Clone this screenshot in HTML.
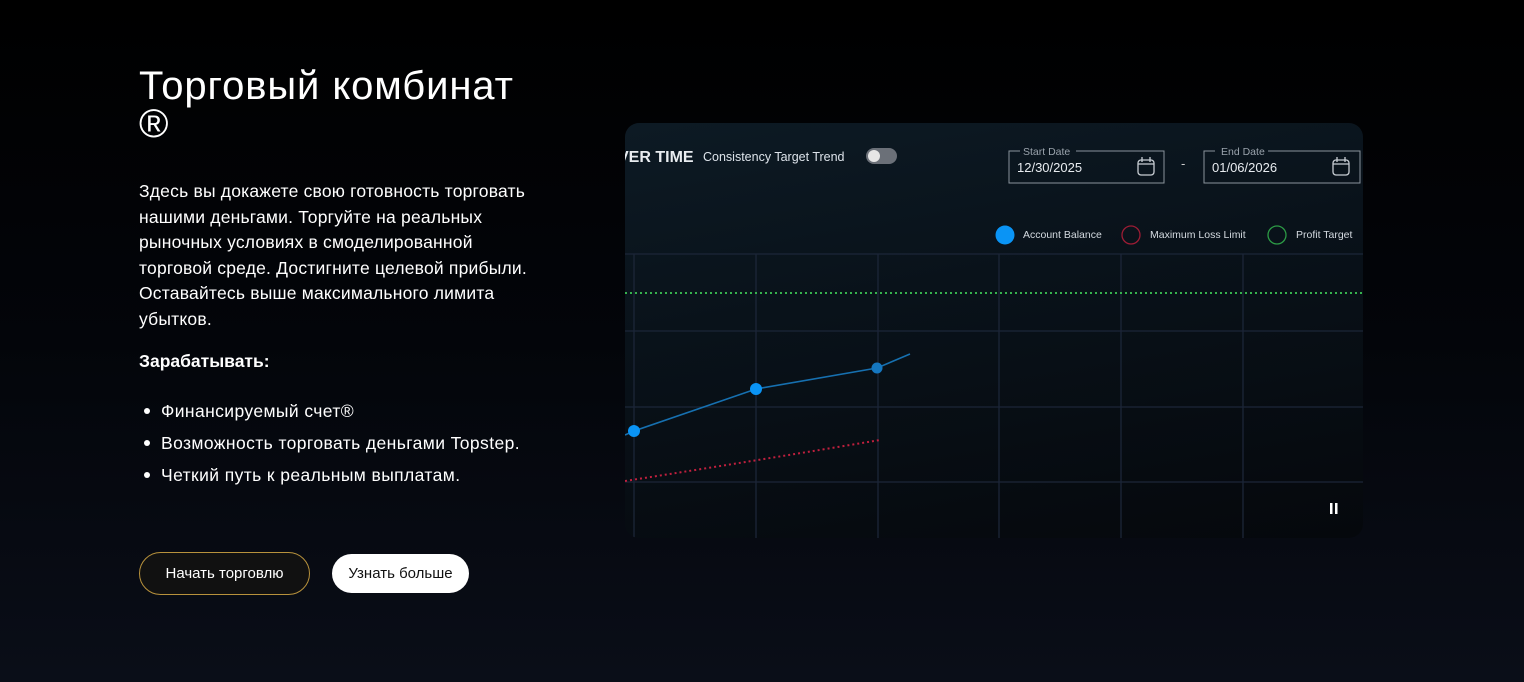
<!DOCTYPE html>
<html><head><meta charset="utf-8"><style>
*{margin:0;padding:0;box-sizing:border-box}
body{width:1524px;height:682px;overflow:hidden;background:linear-gradient(180deg,#000 0%,#03050a 50%,#0a0e18 100%);font-family:"Liberation Sans",sans-serif;color:#fff;position:relative}
h1{position:absolute;left:139px;top:67px;font-size:40px;font-weight:400;line-height:38px;letter-spacing:0.9px}
.p{position:absolute;left:139px;top:179px;width:404px;font-size:17.5px;line-height:25.5px;letter-spacing:0.2px}
.e{position:absolute;left:139px;top:351px;font-size:17.5px;font-weight:700}
ul{position:absolute;left:161px;top:395px;font-size:17.5px;list-style:none;letter-spacing:0.4px}
ul li{line-height:32px;position:relative}
ul li:before{content:"";position:absolute;left:-17px;top:13px;width:6px;height:6px;border-radius:50%;background:#fff}
.b1{position:absolute;left:139px;top:552px;width:171px;height:43px;border:1px solid #b8923c;border-radius:22px;background:#111;font-size:15px;text-align:center;line-height:41px}
.b2{position:absolute;left:332px;top:554px;width:137px;height:39px;border-radius:20px;background:#fff;color:#111;font-size:15px;text-align:center;line-height:39px}
.c{position:absolute;left:625px;top:123px;width:738px;height:415px;border-radius:14px;overflow:hidden;background:linear-gradient(170deg,#0d1a24 0%,#09121a 40%,#05080c 100%)}
</style></head><body>
<h1>Торговый комбинат<br>®</h1>
<div class="p">Здесь вы докажете свою готовность торговать нашими деньгами. Торгуйте на реальных рыночных условиях в смоделированной торговой среде. Достигните целевой прибыли. Оставайтесь выше максимального лимита убытков.</div>
<div class="e">Зарабатывать:</div>
<ul><li>Финансируемый счет®</li><li>Возможность торговать деньгами Topstep.</li><li>Четкий путь к реальным выплатам.</li></ul>
<div class="b1">Начать торговлю</div>
<div class="b2">Узнать больше</div>
<div class="c">
<svg width="738" height="415" viewBox="625 123 738 415" style="position:absolute;left:0;top:0;font-family:'Liberation Sans',sans-serif">
<text x="618" y="162" fill="#e8ecf0" font-size="16" font-weight="700">VER TIME</text>
<text x="703" y="161" fill="#dde3ea" font-size="12.5">Consistency Target Trend</text>
<rect x="866" y="148" width="31" height="16" rx="8" fill="#6b7078"/><circle cx="874" cy="156" r="6" fill="#e6e6e6"/>
<g fill="none" stroke="#8a939c" stroke-width="1">
<path d="M1020 151 H1009 V183 H1164 V151 H1076"/>
<path d="M1215 151 H1204 V183 H1360 V151 H1268"/>
</g>
<text x="1023" y="155" fill="#9aa3ac" font-size="10.5">Start Date</text>
<text x="1221" y="155" fill="#9aa3ac" font-size="10.5">End Date</text>
<text x="1017" y="172" fill="#e8ecf0" font-size="13">12/30/2025</text>
<text x="1212" y="172" fill="#e8ecf0" font-size="13">01/06/2026</text>
<text x="1181" y="168" fill="#ccc" font-size="13">-</text>
<g fill="none" stroke="#c8ced4" stroke-width="1.3">
<rect x="1138" y="160" width="16" height="15" rx="3"/><path d="M1138 164H1154M1142 157v5M1150 157v5"/>
<rect x="1333" y="160" width="16" height="15" rx="3"/><path d="M1333 164H1349M1337 157v5M1345 157v5"/>
</g>
<circle cx="1005" cy="235" r="9.5" fill="#0a94f5"/>
<text x="1023" y="238" fill="#d4dae0" font-size="10.5">Account Balance</text>
<circle cx="1131" cy="235" r="9" fill="none" stroke="#9b1c34" stroke-width="1.3"/>
<text x="1150" y="238" fill="#d4dae0" font-size="10.5">Maximum Loss Limit</text>
<circle cx="1277" cy="235" r="9" fill="none" stroke="#2c9a45" stroke-width="1.3"/>
<text x="1296" y="238" fill="#d4dae0" font-size="10.5">Profit Target</text>
<g stroke="#1c2638" stroke-width="1.3">
<path d="M625 254H1363M625 331H1363M625 407H1363M625 482H1363"/>
<path d="M634 254V538M756 254V538M878 254V538M999 254V538M1121 254V538M1243 254V538"/>
</g>
<path d="M625 293H1363" stroke="#36b24e" stroke-width="2" stroke-dasharray="2 3"/>
<path d="M625 481 Q760 460 880 440" fill="none" stroke="#c0203e" stroke-width="2" stroke-dasharray="2 3"/>
<path d="M625 435 L634 431 L756 389 L877 368 L910 354" fill="none" stroke="#1670b0" stroke-width="1.6"/>
<circle cx="634" cy="431" r="6" fill="#0a94f5"/><circle cx="756" cy="389" r="6" fill="#0a94f5"/><circle cx="877" cy="368" r="5.5" fill="#1577c0"/>
<rect x="1330" y="503" width="2.5" height="11" fill="#fff"/><rect x="1335" y="503" width="2.5" height="11" fill="#fff"/>
</svg>
</div>
</body></html>
